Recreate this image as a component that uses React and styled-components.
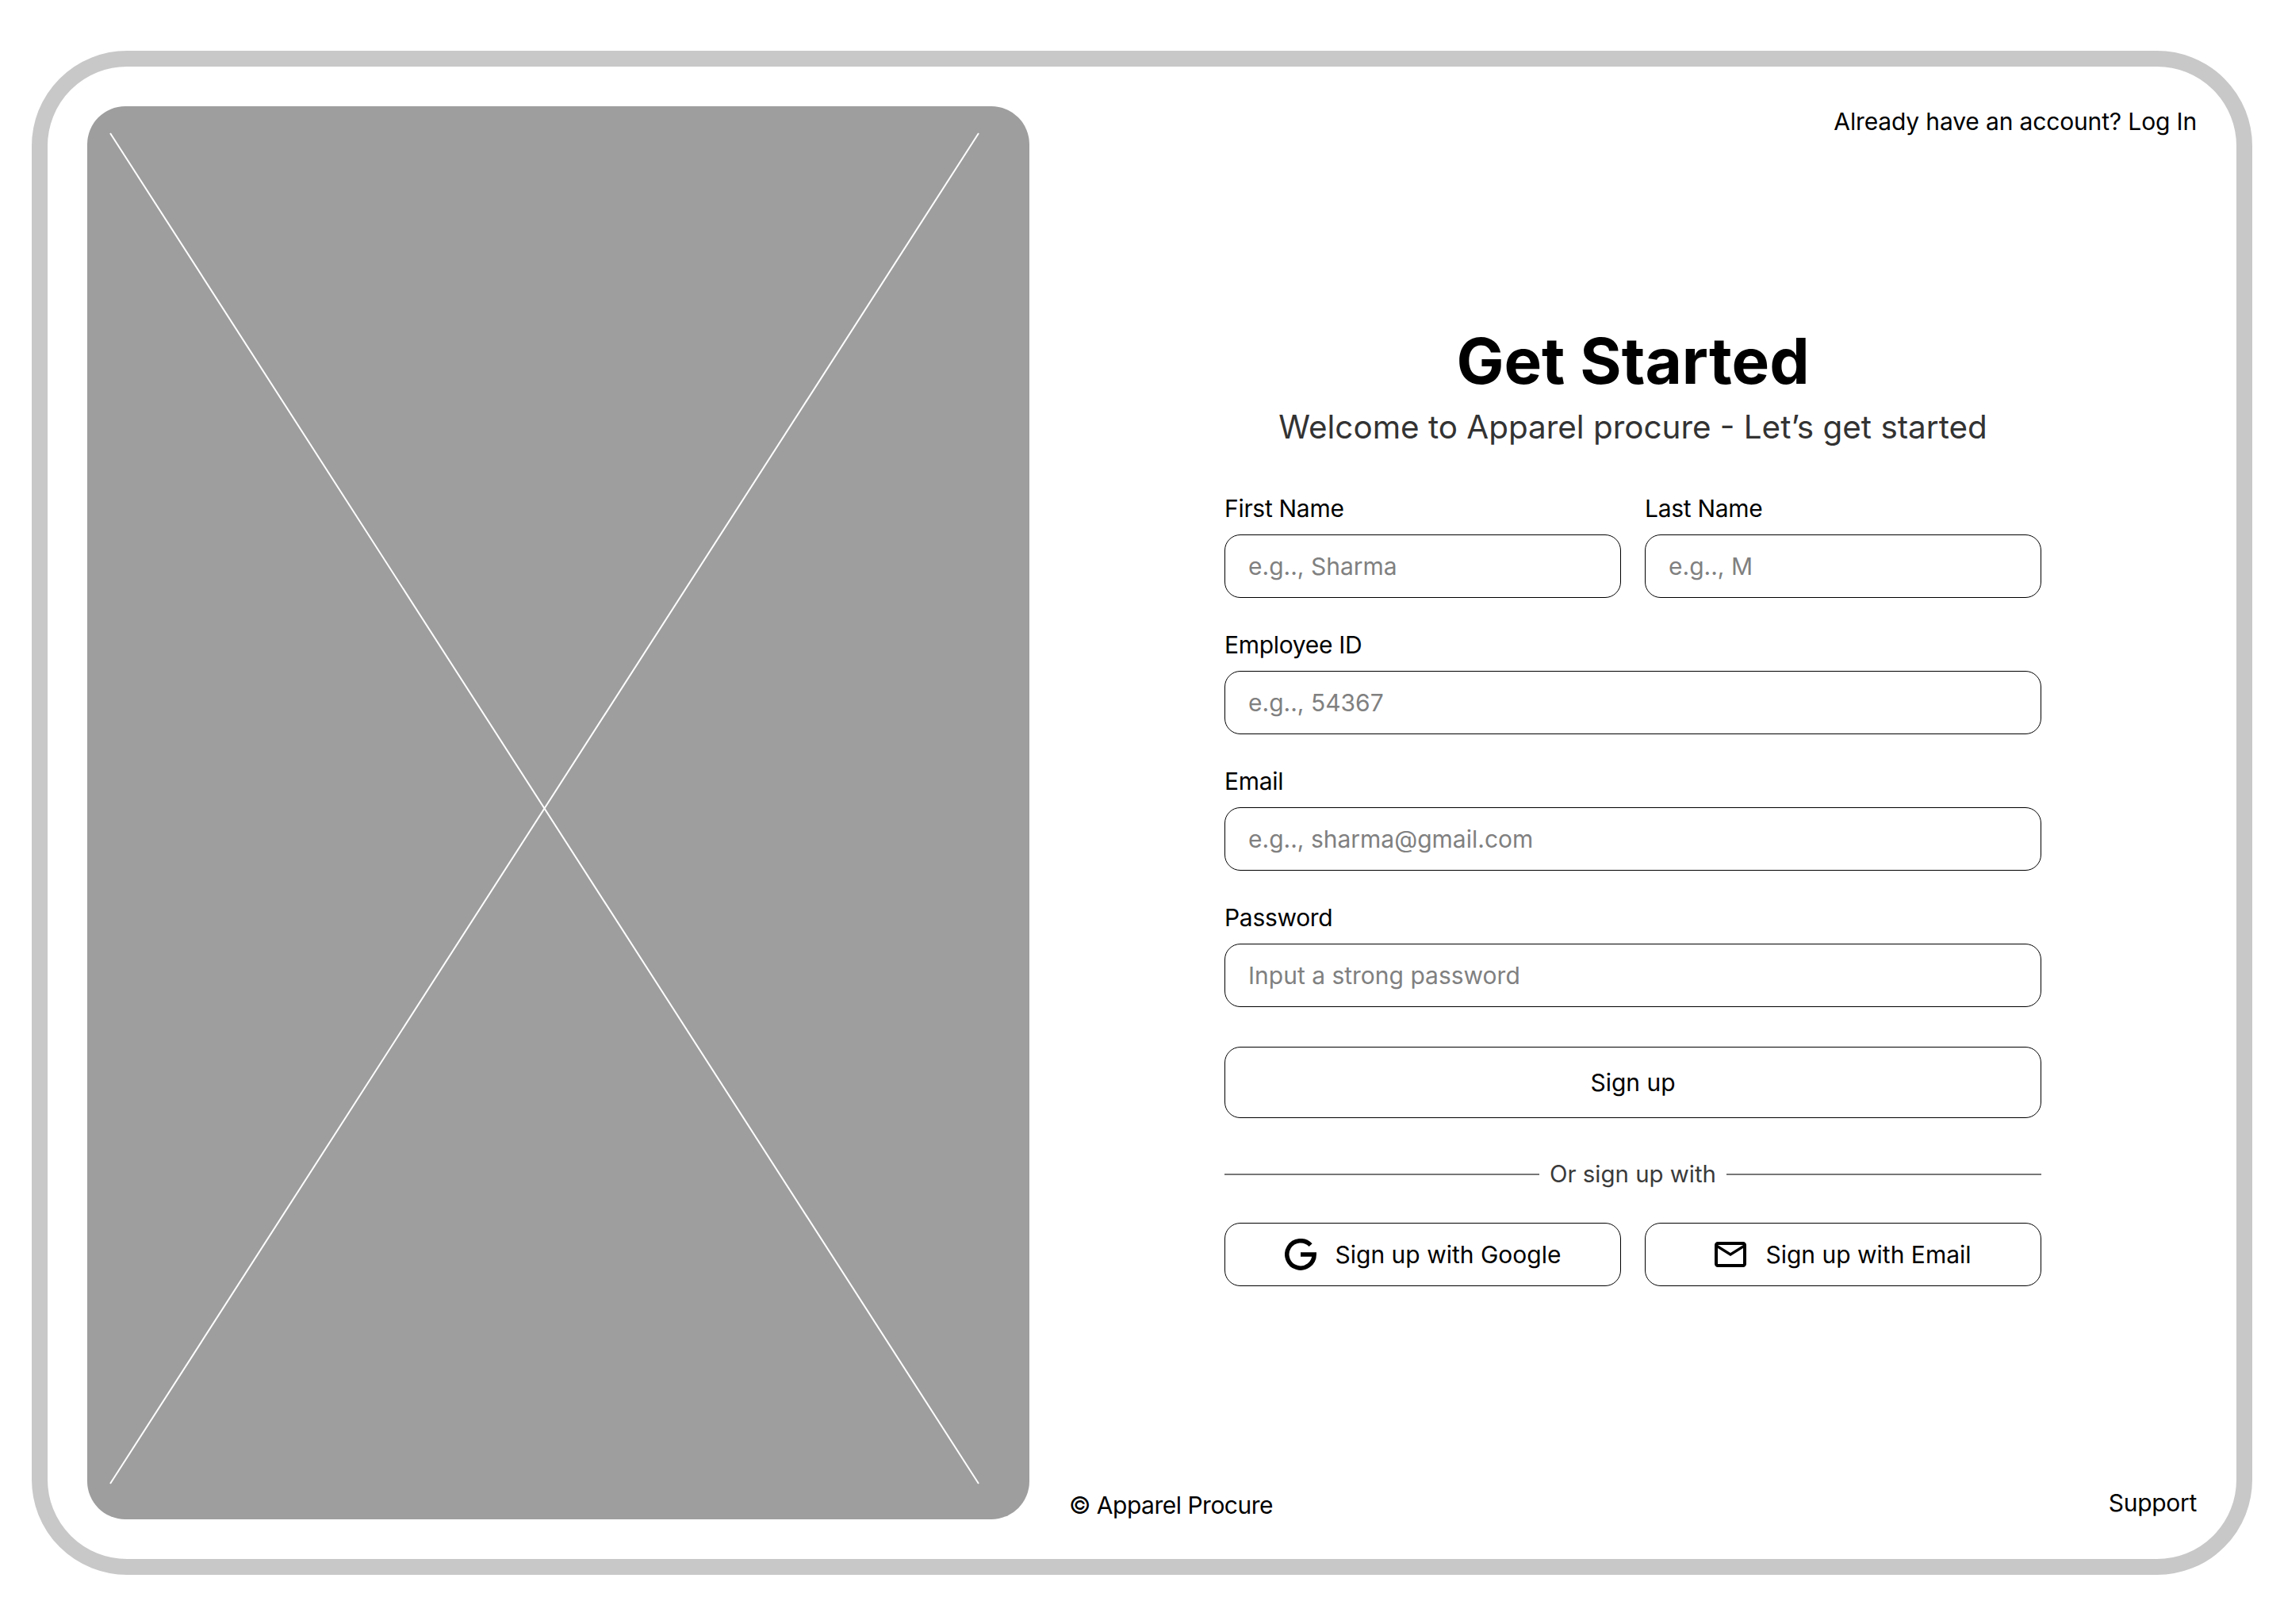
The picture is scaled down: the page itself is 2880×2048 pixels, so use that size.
import React from "react";
import styled, { createGlobalStyle } from "styled-components";

const GlobalStyle = createGlobalStyle`
  * { box-sizing: border-box; }
  html, body { margin: 0; background: #fff; }
  body { font-family: "Inter", "Liberation Sans", sans-serif; color: #000; }
`;

const Frame = styled.div`
  display: flex;
  width: 2800px;
  height: 1922px;
  margin: 64px 40px 62px;
  padding: 50px;
  background: #fff;
  border: 20px solid #c8c8c8;
  border-radius: 120px;
`;

const ImagePanel = styled.div`
  flex: 0 0 1188px;
  height: 1782px;
  background: #9e9e9e;
  border-radius: 48px;
  overflow: hidden;

  svg { display: block; width: 100%; height: 100%; }
`;

const Side = styled.div`
  flex: 1;
  display: flex;
  flex-direction: column;
  padding-left: 50px;
`;

const SmallText = styled.span`
  font-family: "Inter", sans-serif;
  font-size: 30px;
  line-height: 36px;
  letter-spacing: -0.3px;
  color: #000;
`;

const TopLink = styled(SmallText)`
  display: block;
  text-align: right;
  margin-top: 1px;
  letter-spacing: -0.15px;
`;

const Main = styled.main`
  flex: 1;
  width: 1030px;
  margin: 0 auto;
  padding-top: 234px;
`;

const Title = styled.h1`
  margin: 0;
  font-size: 80px;
  line-height: 100px;
  font-weight: 700;
  text-align: center;
  color: #000;
`;

const Subtitle = styled.p`
  margin: 8px 0 0;
  font-size: 40.4px;
  line-height: 52px;
  font-weight: 400;
  text-align: center;
  color: #333;
`;

const Fields = styled.div`
  display: flex;
  flex-direction: column;
  gap: 41px;
  margin-top: 58px;
`;

const Row = styled.div`
  display: grid;
  grid-template-columns: 1fr 1fr;
  gap: 30px;
`;

const Field = styled.label`
  display: flex;
  flex-direction: column;
  gap: 15px;
`;

const Input = styled.input`
  width: 100%;
  height: 80px;
  padding: 0 29px;
  background: #fff;
  border: 1px solid #000;
  border-radius: 20px;
  font-family: "Inter", sans-serif;
  font-size: 30px;
  color: #000;
  outline: none;

  &::placeholder { color: #808080; opacity: 1; }
`;

const SubmitButton = styled.button`
  display: block;
  width: 100%;
  height: 90px;
  margin-top: 50px;
  background: #fff;
  border: 1px solid #000;
  border-radius: 20px;
  font-family: "Inter", sans-serif;
  font-size: 30px;
  color: #000;
`;

const Divider = styled.div`
  display: flex;
  align-items: center;
  gap: 13px;
  margin-top: 53px;
  font-size: 29.4px;
  line-height: 36px;
  color: #3a3a3a;

  &::before, &::after {
    content: "";
    flex: 1;
    height: 1.5px;
    background: #777;
  }
`;

const SocialRow = styled(Row)`
  margin-top: 43px;
`;

const SocialButton = styled.button`
  display: flex;
  align-items: center;
  justify-content: center;
  gap: 24px;
  height: 80px;
  background: #fff;
  border: 1px solid #000;
  border-radius: 20px;
  font-family: "Inter", sans-serif;
  font-size: 30px;
  color: #000;
`;

const Footer = styled.footer`
  display: flex;
  justify-content: space-between;
  align-items: flex-end;
`;

const Copyright = styled(SmallText)`
  letter-spacing: -0.5px;
`;

const Support = styled(SmallText)`
  margin-bottom: 3px;
`;

const GoogleIcon = () => (
  <svg width="40" height="40" viewBox="0 0 40 40" fill="none" stroke="#000" strokeWidth="5.5">
    <path d="M32.6 8.2A17.2 17.2 0 1 0 37.2 20H20" />
  </svg>
);

const MailIcon = () => (
  <svg width="40" height="32" viewBox="2 4 20 16" fill="#000">
    <path d="M20 4H4c-1.1 0-1.99.9-1.99 2L2 18c0 1.1.9 2 2 2h16c1.1 0 2-.9 2-2V6c0-1.1-.9-2-2-2zm0 14H4V8l8 5 8-5v10zm-8-7L4 6h16l-8 5z" />
  </svg>
);

const TextField = ({ label, placeholder, type = "text" }) => (
  <Field>
    <SmallText>{label}</SmallText>
    <Input type={type} placeholder={placeholder} />
  </Field>
);

export default function App() {
  return (
    <>
      <GlobalStyle />
      <Frame>
        <ImagePanel>
          <svg viewBox="0 0 1188 1782" stroke="#fff" strokeWidth="2">
            <line x1="29" y1="34" x2="1124" y2="1737" />
            <line x1="1124" y1="34" x2="29" y2="1737" />
          </svg>
        </ImagePanel>
        <Side>
          <TopLink>Already have an account? Log In</TopLink>
          <Main>
            <Title>Get Started</Title>
            <Subtitle>Welcome to Apparel procure - Let’s get started</Subtitle>
            <Fields>
              <Row>
                <TextField label="First Name" placeholder="e.g.., Sharma" />
                <TextField label="Last Name" placeholder="e.g.., M" />
              </Row>
              <TextField label="Employee ID" placeholder="e.g.., 54367" />
              <TextField label="Email" type="email" placeholder="e.g.., sharma@gmail.com" />
              <TextField label="Password" type="password" placeholder="Input a strong password" />
            </Fields>
            <SubmitButton type="button">Sign up</SubmitButton>
            <Divider>Or sign up with</Divider>
            <SocialRow>
              <SocialButton type="button">
                <GoogleIcon />
                Sign up with Google
              </SocialButton>
              <SocialButton type="button">
                <MailIcon />
                Sign up with Email
              </SocialButton>
            </SocialRow>
          </Main>
          <Footer>
            <Copyright>© Apparel Procure</Copyright>
            <Support>Support</Support>
          </Footer>
        </Side>
      </Frame>
    </>
  );
}
